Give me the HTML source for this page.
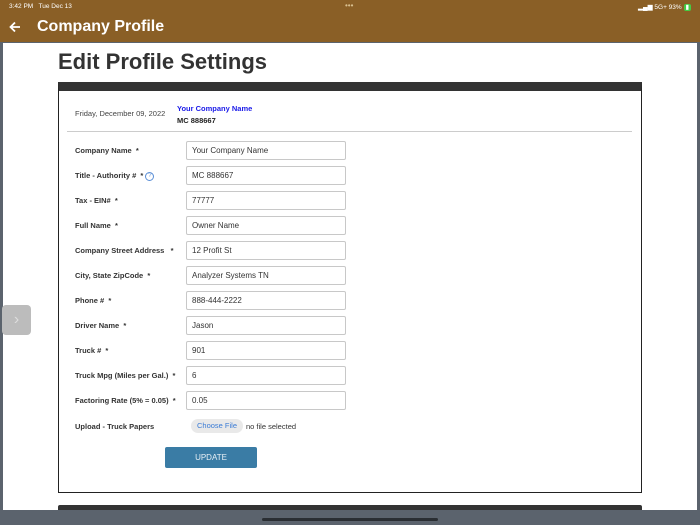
<!DOCTYPE html>
<html><head><style>
*{margin:0;padding:0;box-sizing:border-box}
body{width:700px;height:525px;overflow:hidden;background:#5b636d;font-family:"Liberation Sans",sans-serif;position:relative}
.top{position:absolute;left:0;top:0;width:700px;height:42px;background:#8a5f26;color:#fff}
.page{position:absolute;left:3px;top:43px;width:694px;height:467px;background:#fff}
.abs{position:absolute}
.card{position:absolute;left:58px;top:82px;width:584px;height:411px;border:1px solid #222;border-top:9px solid #333;background:#fff}
.lbl{position:absolute;left:75px;font-size:7.5px;font-weight:bold;color:#333}
.in{position:absolute;left:186px;width:160px;height:19px;border:1px solid #c8c8c8;border-radius:2px;font-size:8px;color:#333;padding:4px 0 0 5px}
</style></head><body>
<div class="top">
<div class="abs" style="left:9px;top:3px;font-size:6.5px">3:42 PM&nbsp;&nbsp; Tue Dec 13</div>
<div class="abs" style="left:345px;top:1px;font-size:8px;color:#d9c090">•••</div>
<div class="abs" style="left:638px;top:3px;font-size:6.5px">▂▄▆ 5G+ 93% <span style="background:#4c4;border-radius:2px;padding:0 2px">▮</span></div>
<svg class="abs" style="left:9px;top:21px" width="12" height="12" viewBox="0 0 12 12"><path d="M11 6H2M6 1.5L1.5 6 6 10.5" stroke="#fff" stroke-width="1.8" fill="none"/></svg>
<div class="abs" style="left:37px;top:18px;font-size:16px;font-weight:bold">Company Profile</div>
</div>
<div class="page"></div>
<div class="abs" style="left:58px;top:49px;font-size:22px;font-weight:bold;color:#333">Edit Profile Settings</div>
<div class="abs" style="left:2px;top:305px;width:29px;height:30px;background:#bcbcbc;border-radius:4px;color:#ddd;font-size:16px;text-align:center;line-height:30px">›</div>
<div class="card"></div>
<div class="abs" style="left:75px;top:109px;font-size:7.5px;color:#444">Friday, December 09, 2022</div>
<div class="abs" style="left:177px;top:104px;font-size:7.5px;font-weight:bold;color:#1a1ae8">Your Company Name</div>
<div class="abs" style="left:177px;top:116px;font-size:7.5px;font-weight:bold;color:#222">MC 888667</div>
<div class="abs" style="left:67px;top:131px;width:565px;height:1px;background:#ccc"></div>

<div class="lbl" style="top:146px">Company Name&nbsp; *</div><div class="in" style="top:141px">Your Company Name</div>
<div class="lbl" style="top:171px">Title - Authority # &nbsp;* <span style="display:inline-block;vertical-align:middle;width:9px;height:9px;border:1px solid #5b8fd6;border-radius:50%;color:#5b8fd6;font-size:6px;text-align:center;line-height:7px;font-weight:normal">?</span></div><div class="in" style="top:166px">MC 888667</div>
<div class="lbl" style="top:196px">Tax - EIN# &nbsp;*</div><div class="in" style="top:191px">77777</div>
<div class="lbl" style="top:221px">Full Name&nbsp; *</div><div class="in" style="top:216px">Owner Name</div>
<div class="lbl" style="top:246px">Company Street Address &nbsp;&nbsp;*</div><div class="in" style="top:241px">12 Profit St</div>
<div class="lbl" style="top:271px">City, State ZipCode&nbsp; *</div><div class="in" style="top:266px">Analyzer Systems TN</div>
<div class="lbl" style="top:296px">Phone # &nbsp;*</div><div class="in" style="top:291px">888-444-2222</div>
<div class="lbl" style="top:321px">Driver Name&nbsp; *</div><div class="in" style="top:316px">Jason</div>
<div class="lbl" style="top:346px">Truck # &nbsp;*</div><div class="in" style="top:341px">901</div>
<div class="lbl" style="top:371px">Truck Mpg (Miles per Gal.)&nbsp; *</div><div class="in" style="top:366px">6</div>
<div class="lbl" style="top:396px">Factoring Rate (5% = 0.05)&nbsp; *</div><div class="in" style="top:391px">0.05</div>
<div class="lbl" style="top:422px">Upload - Truck Papers</div>
<div class="abs" style="left:191px;top:419px;width:52px;height:14px;background:#e9e9e9;border-radius:7px;font-size:7.5px;color:#3a7bd5;text-align:center;line-height:14px">Choose File</div>
<div class="abs" style="left:246px;top:422px;font-size:7.5px;color:#333">no file selected</div>
<div class="abs" style="left:165px;top:447px;width:92px;height:21px;background:#3a7ca5;border-radius:2px;color:#e8f0f6;font-size:8px;text-align:center;line-height:21px">UPDATE</div>
<div class="abs" style="left:58px;top:505px;width:584px;height:5px;background:#333;border-radius:2px 2px 0 0"></div>
<div class="abs" style="left:262px;top:518px;width:176px;height:3px;background:#2a2e33;border-radius:2px"></div>
</body></html>
